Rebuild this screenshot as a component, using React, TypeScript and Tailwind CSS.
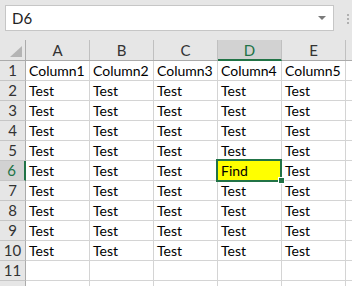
import React from "react";

const cols = ["A", "B", "C", "D", "E", ""];
const rows = Array.from({ length: 12 }, (_, i) => i + 1);

function cellText(r: number, c: number): string {
  if (c > 4 || r > 10) return "";
  if (r === 1) return `Column${c + 1}`;
  if (r === 6 && c === 3) return "Find";
  return "Test";
}

export default function App() {
  return (
    <div className="w-[352px] h-[286px] overflow-hidden bg-white font-['Lato','Liberation_Sans',sans-serif] text-[14px] text-black">
      {/* top bar */}
      <div className="h-[40px] bg-[#e6e6e6] flex items-start pt-[5px] pl-[5px]">
        <div className="w-[329px] h-[26px] bg-white border border-[#c6c6c6] flex items-center justify-between pl-[6px] pr-[7px]">
          <span className="leading-none text-[15px] text-[#222]">D6</span>
          <div className="w-0 h-0 border-l-[4px] border-r-[4px] border-t-[4px] border-l-transparent border-r-transparent border-t-[#7a7a7a]" />
        </div>
        <div className="ml-[13px] mt-[9px] flex flex-col gap-[2px]">
          <div className="w-[2px] h-[2px] bg-[#b0b0b0]" />
          <div className="w-[2px] h-[2px] bg-[#b0b0b0]" />
          <div className="w-[2px] h-[2px] bg-[#b0b0b0]" />
        </div>
      </div>
      {/* header row */}
      <div className="flex h-[21px] bg-[#e6e6e6] border-b border-[#ababab]">
        <div className="w-[26px] shrink-0 border-r border-[#ababab] relative">
          <svg className="absolute left-[10px] top-[6px]" width="12" height="11" viewBox="0 0 12 11">
            <polygon points="12,0 12,11 0,11" fill="#b4b4b4" />
          </svg>
        </div>
        {cols.map((c, i) => (
          <div
            key={i}
            className={
              "w-[64px] shrink-0 border-r border-[#c0c0c0] flex justify-center leading-[20px] text-[15px] " +
              (c === "D"
                ? "bg-[#d2d2d2] text-[#217346] border-b-2 border-b-[#217346] -mb-[1px]"
                : "text-[#333]")
            }
          >
            {c}
          </div>
        ))}
      </div>
      {rows.map((r) => (
        <div key={r} className="flex h-[20px]">
          <div
            className={
              "w-[26px] shrink-0 border-b border-[#c6c6c6] flex justify-center leading-[19px] text-[15px] " +
              (r === 6
                ? "bg-[#d2d2d2] text-[#217346] border-r-2 border-r-[#217346] pr-[1px]"
                : "bg-[#e6e6e6] text-[#333] border-r border-r-[#ababab]")
            }
          >
            {r <= 11 ? r : ""}
          </div>
          {cols.map((_, c) => {
            const sel = r === 6 && c === 3;
            return (
              <div
                key={c}
                className={
                  "w-[64px] shrink-0 border-r border-b border-[#d4d4d4] pl-[3px] leading-[19px] whitespace-nowrap relative " +
                  (sel ? "bg-[#ffff00] z-10" : "")
                }
              >
                {cellText(r, c)}
                {sel && (
                  <>
                    <div className="absolute -left-[2px] -top-[2px] -right-[1px] -bottom-[2px] border-2 border-[#217346]" />
                    <div className="absolute -right-[4px] -bottom-[4px] w-[7px] h-[7px] bg-[#217346] border border-white" />
                  </>
                )}
              </div>
            );
          })}
        </div>
      ))}
    </div>
  );
}
